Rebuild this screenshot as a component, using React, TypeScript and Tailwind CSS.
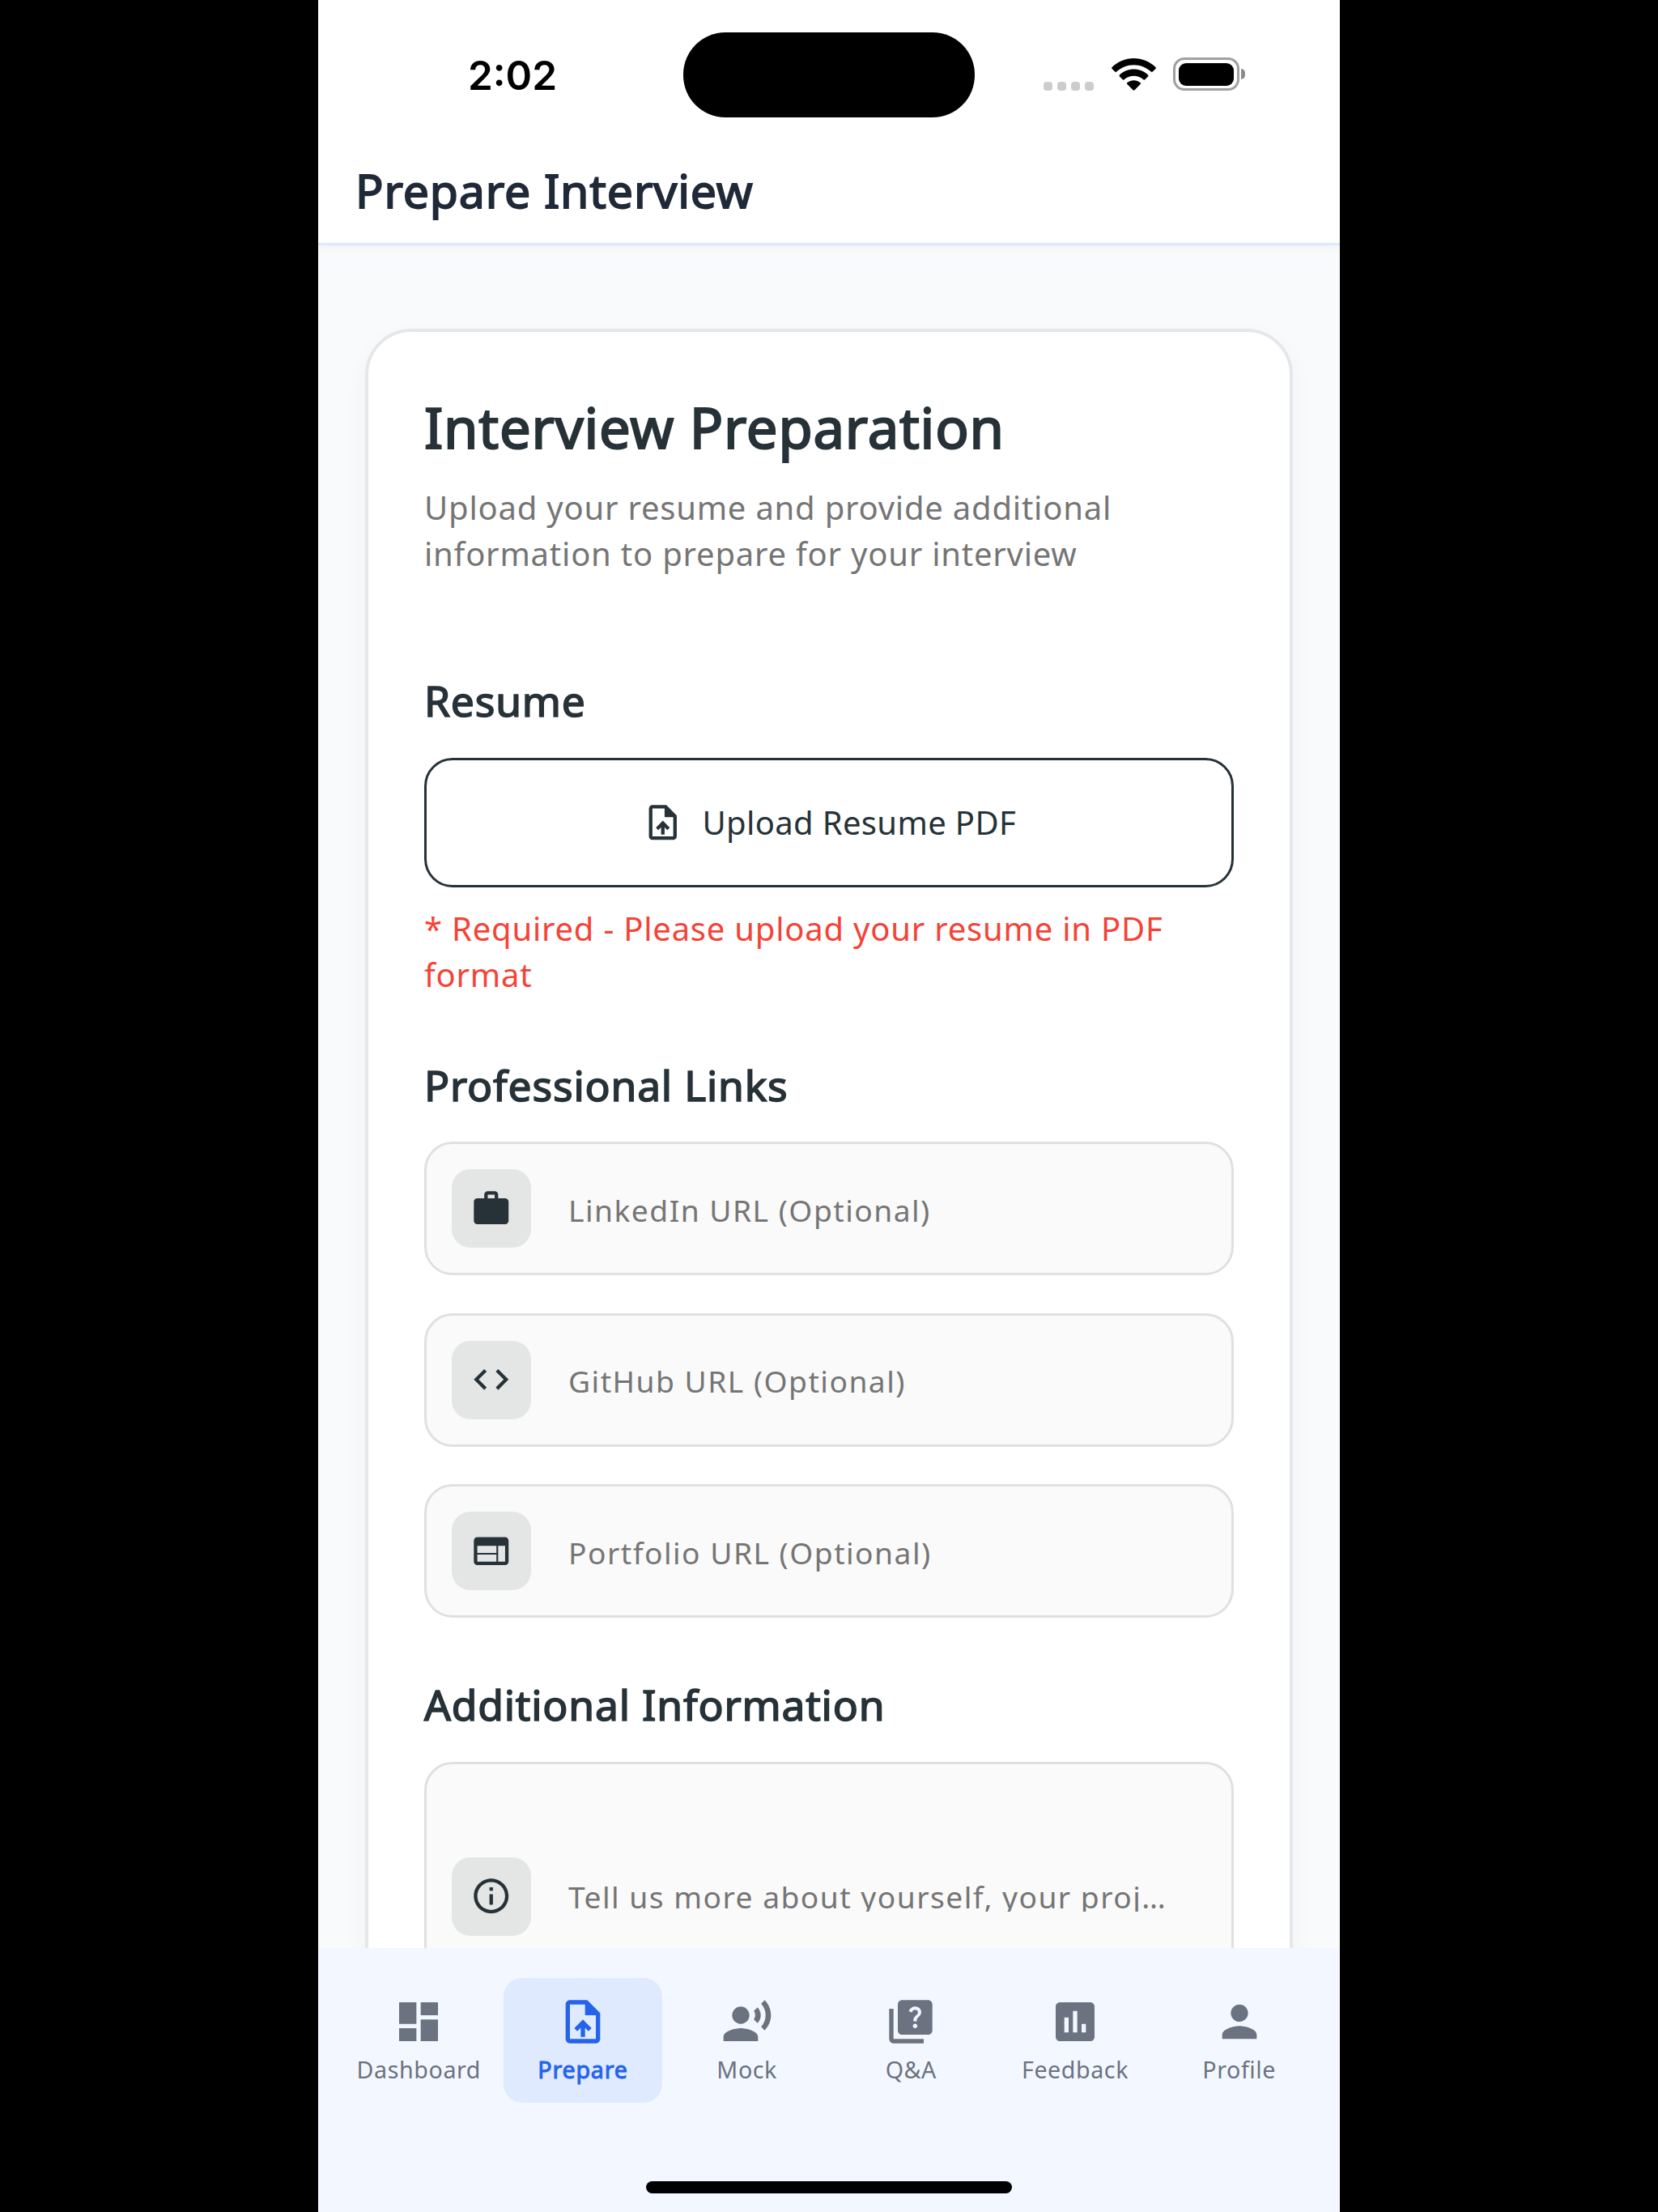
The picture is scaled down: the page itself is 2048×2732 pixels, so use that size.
import type { ReactNode } from "react";
import type { IconType } from "react-icons";
import {
  MdAssessment,
  MdCode,
  MdDashboard,
  MdInfoOutline,
  MdPerson,
  MdQuiz,
  MdRecordVoiceOver,
  MdUploadFile,
  MdWeb,
  MdWork,
} from "react-icons/md";

const links: { icon: IconType; label: string }[] = [
  { icon: MdWork, label: "LinkedIn URL (Optional)" },
  { icon: MdCode, label: "GitHub URL (Optional)" },
  { icon: MdWeb, label: "Portfolio URL (Optional)" },
];

const tabs: { icon: IconType; label: string; active?: boolean }[] = [
  { icon: MdDashboard, label: "Dashboard" },
  { icon: MdUploadFile, label: "Prepare", active: true },
  { icon: MdRecordVoiceOver, label: "Mock" },
  { icon: MdQuiz, label: "Q&A" },
  { icon: MdAssessment, label: "Feedback" },
  { icon: MdPerson, label: "Profile" },
];

function StatusBar() {
  return (
    <div className="relative flex h-[195px] shrink-0 items-start">
      <div className="ml-[183px] mt-[60px] w-[114px] text-center font-['Inter',sans-serif] text-[49.5px] leading-[66px] font-semibold text-black">
        2:02
      </div>
      <div className="absolute left-[451px] top-[40px] h-[105px] w-[360px] rounded-[52px] bg-black" />
      <div className="ml-auto mr-[117px] mt-[71px] flex h-[41px]">
        <div className="mr-[22px] mt-[30px] flex gap-[6px]">
          {[0, 1, 2, 3].map((i) => (
            <span key={i} className="h-[11px] w-[11px] rounded-[4px] bg-[#cccccc]" />
          ))}
        </div>
        <svg className="mt-px h-[40px] w-[55px]" viewBox="0 0 55 40">
          <path d="M27.5 0C38 0 47.500 4.200 54.400 11 55 11.600 55 12.500 54.400 13.100L50.800 16.600C50.200 17.200 49.400 17.200 48.800 16.600 43.300 11.400 35.800 8.200 27.500 8.200S11.700 11.400 6.200 16.600C5.600 17.200 4.800 17.200 4.200 16.600L.6 13.100C0 12.500 0 11.600.6 11 7.500 4.200 17 0 27.500 0Z" />
          <path d="M27.500 13.600C34.300 13.600 40.400 16.200 45 20.500 45.600 21.100 45.600 22 45 22.600L41.300 26.200C40.700 26.800 39.900 26.800 39.300 26.200 36.200 23.500 32 21.800 27.500 21.800S18.800 23.500 15.700 26.200C15.100 26.800 14.300 26.800 13.700 26.200L10 22.600C9.400 22 9.400 21.100 10 20.500 14.600 16.200 20.700 13.600 27.500 13.600Z" />
          <path d="M27.500 27.200C30.600 27.200 33.400 28.300 35.600 30.100 36.200 30.700 36.200 31.500 35.600 32.100L28.500 39.200C27.900 39.800 27.100 39.800 26.500 39.200L19.400 32.100C18.800 31.500 18.800 30.700 19.400 30.100 21.600 28.300 24.400 27.200 27.500 27.200Z" />
        </svg>
        <div className="ml-[21px] h-[41px] w-[82px] rounded-[14px] border-[3px] border-[#a0a0a0] px-[4px] pt-[4px] pb-[3px]">
          <div className="h-full w-full rounded-[9px] bg-black" />
        </div>
        <div className="ml-[2px] mt-[14px] h-[13px] w-[5px] rounded-r-full bg-[#8c8c8c]" />
      </div>
    </div>
  );
}

function SectionTitle({ children }: { children: ReactNode }) {
  return (
    <h2 className="text-[51.5px] leading-[72px] tracking-[0.82px] text-[#263238] [-webkit-text-stroke:1.6px_#263238]">
      {children}
    </h2>
  );
}

function IconBox({ icon: Icon }: { icon: IconType }) {
  return (
    <div className="flex h-[97px] w-[98px] shrink-0 items-center justify-center rounded-[23px] bg-[#e4e6e5]">
      <Icon className="size-[51.5px] text-[#263238]" />
    </div>
  );
}

export default function App() {
  return (
    <div className="flex h-[2732px] w-[2048px] justify-center overflow-hidden bg-black font-['Noto_Sans',sans-serif]">
      <div className="flex h-full w-[1262px] flex-col bg-[#f8fafc]">
        <header className="z-10 flex h-[303px] shrink-0 flex-col border-b-[3px] border-[#dbeafe] bg-white shadow-[0_3px_12px_rgba(0,0,0,0.04)]">
          <StatusBar />
          <h1 className="pl-[46px] text-[57.2px] leading-[81px] tracking-[0.84px] text-[#1f2937] [-webkit-text-stroke:1.8px_#1f2937]">
            Prepare Interview
          </h1>
        </header>

        <main className="min-h-0 flex-1 overflow-hidden px-[58px] pt-[103px]">
          <section className="h-[2400px] rounded-[57px] border-4 border-[#e5e7eb] bg-white px-[69px] pt-[70px] shadow-[0_12px_30px_rgba(0,0,0,0.04)]">
            <h2 className="text-[68.7px] leading-[96px] tracking-[0.82px] text-[#263238] [-webkit-text-stroke:2.15px_#263238]">
              Interview Preparation
            </h2>
            <p className="mt-[22px] text-[40px] leading-[57px] tracking-[0.78px] text-[#757575]">
              Upload your resume and provide additional
              <br />
              information to prepare for your interview
            </p>

            <div className="mt-[117px]">
              <SectionTitle>Resume</SectionTitle>
              <button className="mt-[35px] flex h-[160px] w-full items-center justify-center rounded-[35px] border-[3px] border-[#263238] text-[#263238]">
                <MdUploadFile className="size-[51.5px]" />
                <span className="ml-[23px] text-[40px] tracking-[0.35px]">Upload Resume PDF</span>
              </button>
              <p className="mt-[22px] text-[40px] leading-[57px] tracking-[0.78px] text-[#f44336]">
                * Required - Please upload your resume in PDF
                <br />
                format
              </p>
            </div>

            <div className="mt-[72px]">
              <SectionTitle>Professional Links</SectionTitle>
              <div className="mt-[34px] flex flex-col gap-[46.5px]">
                {links.map(({ icon, label }) => (
                  <div
                    key={label}
                    className="flex h-[165px] items-center rounded-[35px] border-[3px] border-[#e0e0e0] bg-[#fafafa] pl-[31px]"
                  >
                    <IconBox icon={icon} />
                    <span className="ml-[46px] pt-[4px] text-[37.2px] leading-[52px] tracking-[1.48px] text-[#757575]">
                      {label}
                    </span>
                  </div>
                ))}
              </div>
            </div>

            <div className="mt-[71px]">
              <SectionTitle>Additional Information</SectionTitle>
              <div className="mt-[35px] flex h-[332px] items-center rounded-[35px] border-[3px] border-[#e0e0e0] bg-[#fafafa] pl-[31px]">
                <IconBox icon={MdInfoOutline} />
                <span className="mt-[2px] ml-[46px] h-[36px] overflow-hidden text-[37.2px] leading-[36px] tracking-[1.48px] whitespace-nowrap text-[#757575]">
                  Tell us more about yourself, your proj…
                </span>
              </div>
            </div>
          </section>
        </main>

        <nav className="flex h-[326px] shrink-0 flex-col items-center justify-between bg-[#f3f7ff] pt-[37px] pb-[23px]">
          <div className="grid w-[1216px] grid-cols-6">
            {tabs.map(({ icon: TabIcon, label, active }) => (
              <div
                key={label}
                className={
                  active
                    ? "mx-[3px] flex h-[154px] flex-col items-center rounded-[23px] bg-[#dfeafe] pt-[22px] text-[#2563eb]"
                    : "mx-[3px] flex h-[154px] flex-col items-center rounded-[23px] pt-[22px] text-[#6b7280]"
                }
              >
                <TabIcon className="size-[64px]" />
                <span
                  className={
                    active
                      ? "mt-[7px] text-[28.6px] leading-[40px] tracking-[0.8px] [-webkit-text-stroke:1px_#2563eb]"
                      : "mt-[7px] text-[28.6px] leading-[40px] tracking-[0.6px]"
                  }
                >
                  {label}
                </span>
              </div>
            ))}
          </div>
          <div className="h-[15px] w-[452px] rounded-full bg-black" />
        </nav>
      </div>
    </div>
  );
}
